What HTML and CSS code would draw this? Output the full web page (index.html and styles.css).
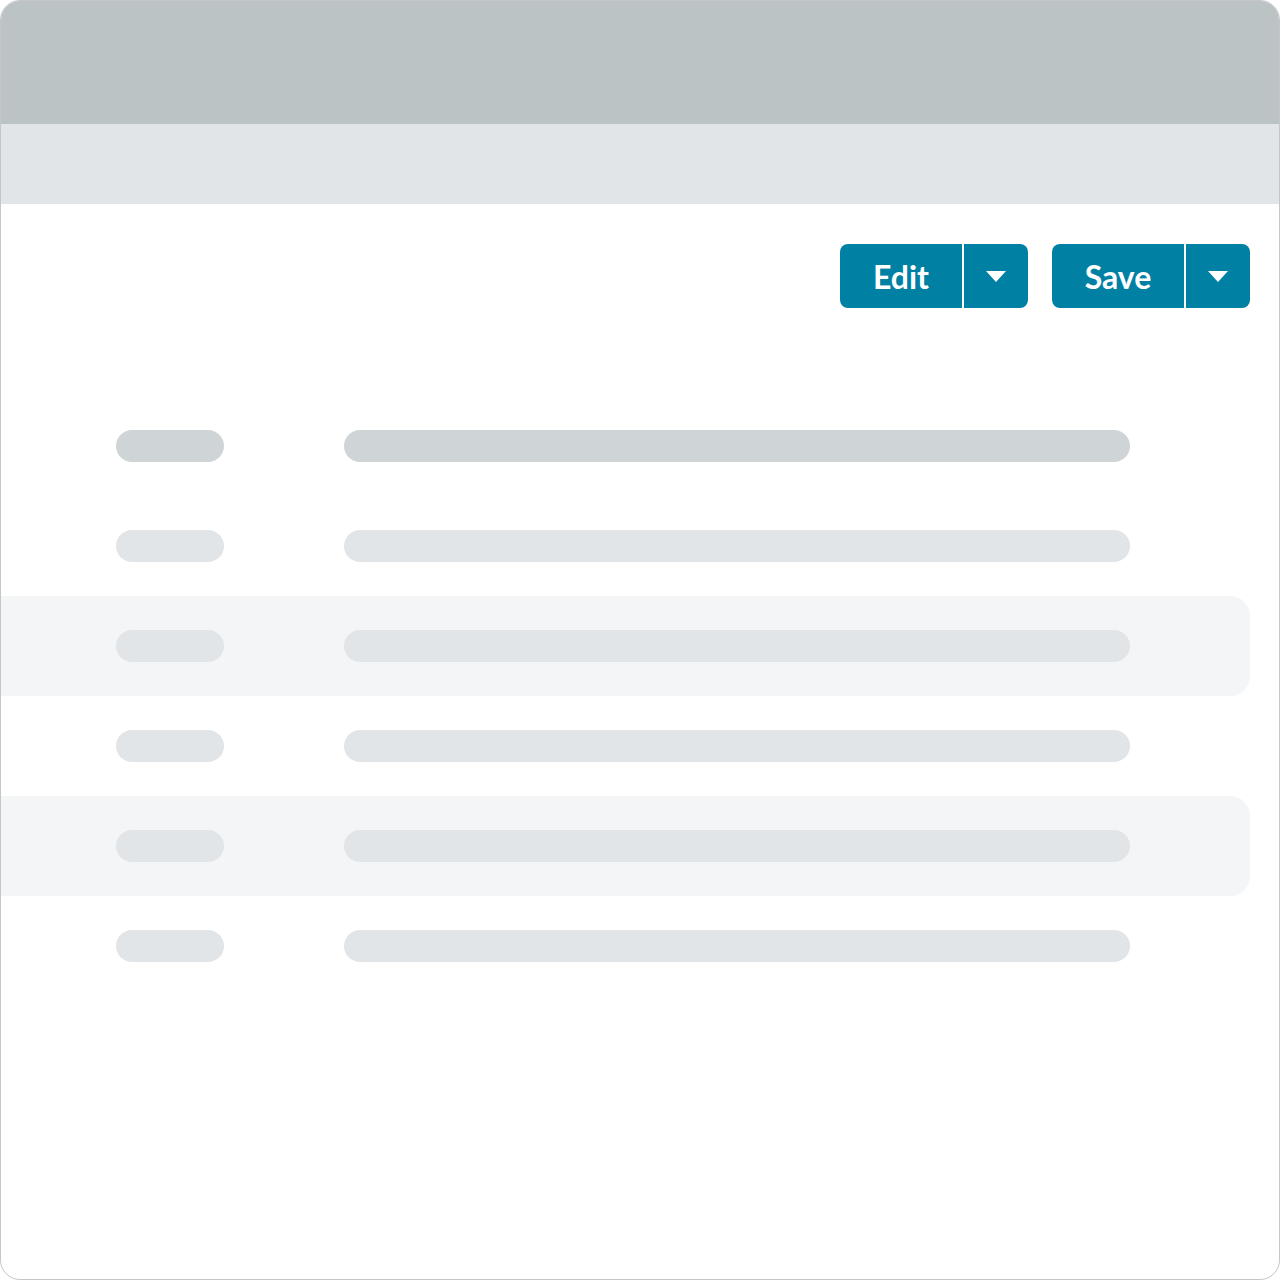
FILE: index.html
```html
<!DOCTYPE html>
<html lang="en">
<head>
    <meta charset="UTF-8">
    <title>Record view</title>
    <link rel="stylesheet" href="styles.css">
</head>
<body>
    <div class="window">
        <header class="topbar"></header>
        <div class="subbar"></div>

        <main>
            <!-- Action buttons -->
            <div class="actions">
                <div class="split-btn">
                    <button class="btn-main edit">Edit</button>
                    <button class="btn-caret"><span class="caret"></span></button>
                </div>
                <div class="split-btn">
                    <button class="btn-main save">Save</button>
                    <button class="btn-caret"><span class="caret"></span></button>
                </div>
            </div>

            <!-- Placeholder rows -->
            <div class="rows">
                <div class="row head"><span class="pill short"></span><span class="pill long"></span></div>
                <div class="row"><span class="pill short"></span><span class="pill long"></span></div>
                <div class="row striped"><span class="pill short"></span><span class="pill long"></span></div>
                <div class="row"><span class="pill short"></span><span class="pill long"></span></div>
                <div class="row striped"><span class="pill short"></span><span class="pill long"></span></div>
                <div class="row"><span class="pill short"></span><span class="pill long"></span></div>
            </div>
        </main>
    </div>
</body>
</html>
```

FILE: styles.css
```css
body {
    margin: 0;
    padding: 0;
    background-color: #fff;
    font-family: Lato, "Liberation Sans", sans-serif;
}
.window {
    box-sizing: border-box;
    width: 1280px;
    height: 1280px;
    border: 1px solid #c4c6c7;
    border-radius: 20px;
    overflow: hidden;
    background: white;
}
.topbar {
    height: 123px;
    background-color: #bcc3c5;
}
.subbar {
    height: 80px;
    background-color: #e1e5e8;
}
main {
    padding-top: 40px;
}
.actions {
    display: flex;
    justify-content: flex-end;
    gap: 24px;
    padding-right: 29px;
}
.split-btn {
    display: flex;
    gap: 2px;
    height: 64px;
}
.split-btn button {
    border: none;
    background-color: #0081a3;
    color: white;
    padding: 0;
    cursor: pointer;
    font-family: Lato, "Liberation Sans", sans-serif;
}
.btn-main {
    font-size: 32px;
    font-weight: bold;
    border-radius: 8px 0 0 8px;
}
.btn-main.edit {
    width: 122px;
}
.btn-main.save {
    width: 132px;
}
.btn-caret {
    width: 64px;
    border-radius: 0 8px 8px 0;
    display: flex;
    align-items: center;
    justify-content: center;
}
.caret {
    width: 0;
    height: 0;
    border-left: 10px solid transparent;
    border-right: 10px solid transparent;
    border-top: 11px solid white;
    margin-top: 1px;
}
.rows {
    margin-top: 88px;
    width: 1249px;
}
.row {
    height: 100px;
    display: flex;
    align-items: center;
    padding-left: 115px;
    gap: 120px;
    border-radius: 0 20px 20px 0;
}
.row.striped {
    background-color: #f4f5f7;
}
.pill {
    height: 32px;
    border-radius: 16px;
    background-color: #e1e5e8;
}
.row.head .pill {
    background-color: #cfd4d7;
}
.pill.short {
    width: 108px;
}
.pill.long {
    width: 786px;
}
```
